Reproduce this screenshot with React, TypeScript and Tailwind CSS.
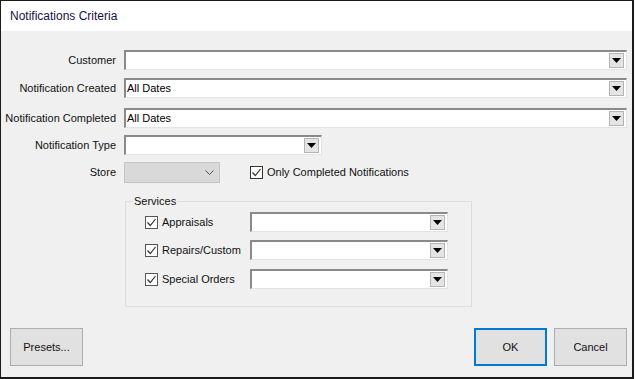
import React from "react";

const font = { fontFamily: '"Liberation Sans", Arial, sans-serif' };

function DropButton() {
  return (
    <div className="flex h-[15px] w-[15px] items-center justify-center border border-[#b4b4b4] bg-[#e4e4e4]">
      <svg width="9" height="5" viewBox="0 0 9 5">
        <path d="M0 0h9L4.5 5z" fill="#000" />
      </svg>
    </div>
  );
}

function Combo({ width, value }: { width: string; value?: string }) {
  return (
    <div
      className={`${width} flex h-[20px] items-center justify-between border-t-2 border-l-2 border-r border-b border-t-[#8a8a8a] border-l-[#8a8a8a] border-r-[#e3e3e3] border-b-[#e3e3e3] bg-white pl-[1px] pr-[2px] text-[11px] text-black`}
    >
      <span className="leading-none">{value ?? ""}</span>
      <DropButton />
    </div>
  );
}

function Check({ light = false }: { light?: boolean }) {
  return (
    <div
      className={`flex h-[13px] w-[13px] items-center justify-center border bg-white ${
        light ? "border-[#555]" : "border-[#333]"
      }`}
    >
      <svg width="11" height="11" viewBox="0 0 11 11">
        <path d="M1.5 5.5l2.8 3L9.5 2" fill="none" stroke="#333" strokeWidth="1.2" />
      </svg>
    </div>
  );
}

function FieldRow({ label, children, className = "" }: { label: string; children: React.ReactNode; className?: string }) {
  return (
    <div className={`flex items-center ${className}`}>
      <div className="w-[115px] whitespace-nowrap text-right text-[11px] text-[#111]">{label}</div>
      <div className="ml-[8px] flex items-center">{children}</div>
    </div>
  );
}

function ServiceRow({ label, className = "" }: { label: string; className?: string }) {
  return (
    <div className={`flex items-center ${className}`}>
      <div className="ml-[19px] flex w-[105px] items-center">
        <Check light />
        <span className="ml-[4px] text-[11px] text-[#111]">{label}</span>
      </div>
      <Combo width="w-[198px]" />
    </div>
  );
}

function WinButton({ label, primary = false }: { label: string; primary?: boolean }) {
  return (
    <button
      className={`h-[38px] w-[73px] bg-[#e1e1e1] text-[11px] text-[#111] ${
        primary ? "border-2 border-[#0078d7]" : "border border-[#adadad]"
      }`}
    >
      {label}
    </button>
  );
}

export default function App() {
  return (
    <div className="h-[379px] w-[636px] bg-white" style={font}>
      <div className="flex h-[379px] w-[634px] flex-col border-t border-l border-r-2 border-b-2 border-[#1b1b1b]">
        <div className="flex h-[30px] shrink-0 items-center bg-white pl-[9px] text-[12px] text-[#1a1040]">
          Notifications Criteria
        </div>
        <div className="flex flex-1 flex-col bg-[#f0f0f0]">
          <FieldRow label="Customer" className="mt-[19px]">
            <Combo width="w-[503px]" />
          </FieldRow>
          <FieldRow label="Notification Created" className="mt-[8px]">
            <Combo width="w-[503px]" value="All Dates" />
          </FieldRow>
          <FieldRow label="Notification Completed" className="mt-[10px]">
            <Combo width="w-[503px]" value="All Dates" />
          </FieldRow>
          <FieldRow label="Notification Type" className="mt-[7px]">
            <Combo width="w-[198px]" />
          </FieldRow>
          <FieldRow label="Store" className="mt-[7px]">
            <div className="flex h-[21px] w-[96px] items-center justify-end border border-[#c4c4c4] bg-[#d9d9d9] pr-[5px]">
              <svg width="9" height="6" viewBox="0 0 9 6">
                <path d="M0.5 0.5l4 4 4-4" fill="none" stroke="#555" strokeWidth="1" />
              </svg>
            </div>
            <div className="ml-[30px] flex items-center">
              <Check />
              <span className="ml-[4px] text-[11px] text-[#111]">Only Completed Notifications</span>
            </div>
          </FieldRow>

          <div className="ml-[124px] mt-[18px] h-[106px] w-[347px] border border-[#dcdcdc]">
            <div className="-mt-[8px] ml-[7px] w-fit bg-[#f0f0f0] px-[1px] text-[11px] leading-[14px] text-[#111]">
              Services
            </div>
            <ServiceRow label="Appraisals" className="mt-[4px]" />
            <ServiceRow label="Repairs/Custom" className="mt-[8px]" />
            <ServiceRow label="Special Orders" className="mt-[9px]" />
          </div>

          <div className="mt-[21px] flex items-center pl-[9px] pr-[5px]">
            <WinButton label="Presets..." />
            <div className="ml-auto flex gap-[7px]">
              <WinButton label="OK" primary />
              <WinButton label="Cancel" />
            </div>
          </div>
        </div>
      </div>
    </div>
  );
}
